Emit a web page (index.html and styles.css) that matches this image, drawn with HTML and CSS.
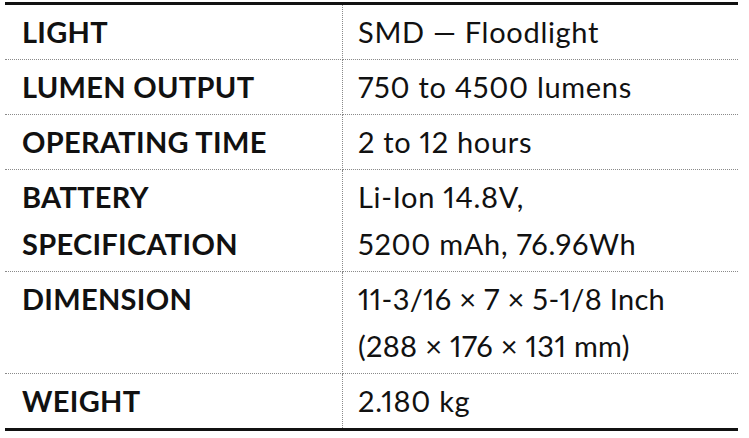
FILE: index.html
```html
<!DOCTYPE html>
<html>
<head>
<meta charset="utf-8">
<link rel="stylesheet" href="styles.css">
</head>
<body>
<table class="spec">
  <tr><th>LIGHT</th><td>SMD — Floodlight</td></tr>
  <tr><th>LUMEN OUTPUT</th><td>750 to 4500 lumens</td></tr>
  <tr><th>OPERATING TIME</th><td>2 to 12 hours</td></tr>
  <tr><th>BATTERY<br>SPECIFICATION</th><td>Li-Ion 14.8V,<br>5200 mAh, 76.96Wh</td></tr>
  <tr><th>DIMENSION</th><td class="dim">11-3/16 × 7 × 5-1/8 Inch<br>(288 × 176 × 131 mm)</td></tr>
  <tr><th>WEIGHT</th><td>2.180 kg</td></tr>
</table>
</body>
</html>
```
FILE: styles.css
```css
html, body {
  margin: 0;
  padding: 0;
  background: #fff;
}
body {
  padding: 2px 0 0 5px;
  font-family: "Lato", "Open Sans", sans-serif;
  color: #111;
}
.spec {
  width: 733px;
  border-collapse: collapse;
  border-top: 3px solid #111;
  border-bottom: 3px solid #111;
}
.spec th, .spec td {
  font-size: 29px;
  line-height: 47px;
  padding: 3px 0 4px;
  text-align: left;
  vertical-align: top;
  border-bottom: 1px dotted #8a8a8a;
}
.spec tr:last-child th, .spec tr:last-child td {
  border-bottom: none;
}
.spec th {
  width: 320px;
  padding-left: 17px;
  font-weight: 700;
  letter-spacing: 0.3px;
  border-right: 1px dotted #8a8a8a;
}
.spec td {
  padding-left: 15px;
  font-weight: 400;
  letter-spacing: 0.7px;
  font-variant-numeric: proportional-nums;
}
.spec td.dim {
  letter-spacing: 0.3px;
}
```
